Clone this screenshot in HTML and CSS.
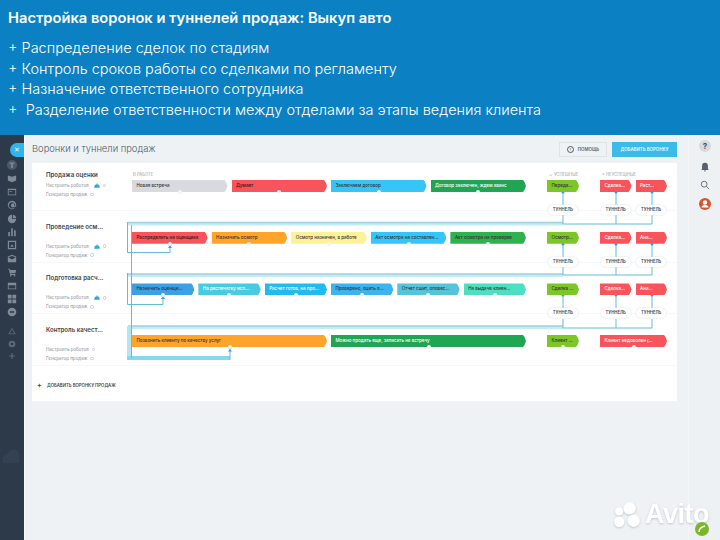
FILE: index.html
```html
<!DOCTYPE html>
<html lang="ru">
<head>
<meta charset="utf-8">
<title>Настройка воронок и туннелей продаж</title>
<link rel="stylesheet" href="styles.css">
</head>
<body>
<header class="hero">
  <h1 class="hero-title">Настройка воронок и туннелей продаж: Выкуп авто</h1>
  <ul class="hero-list">
    <li>+ Распределение сделок по стадиям</li>
    <li>+ Контроль сроков работы со сделками по регламенту</li>
    <li>+ Назначение ответственного сотрудника</li>
    <li>+&nbsp; Разделение ответственности между отделами за этапы ведения клиента</li>
  </ul>
</header>
<div class="app">
  <nav class="sidebar">
    <button class="toggle">✕</button>
    <svg class="nav-icon" viewBox="0 0 12 12"><circle cx="6" cy="6" r="6" fill="#4a5967"/><path d="M3 3h6v1.500H7v5H5v-5H3z"/></svg>
    <svg class="nav-icon" viewBox="0 0 12 12"><path d="M1 3l5 1.500L11 3v6L6 11 1 9z"/></svg>
    <svg class="nav-icon" viewBox="0 0 12 12"><path d="M1 2h10v8H1zM2 3.500v5.500h8V3.500zM3 5h3v1H3z" fill-rule="evenodd"/></svg>
    <svg class="nav-icon" viewBox="0 0 12 12"><path d="M6 1a5 5 0 1 0 3 9V8.800A3.800 3.800 0 1 1 9.800 6v1H8.500V4h-1v.500A2.200 2.200 0 1 0 8.500 8H11V6a5 5 0 0 0-5-5z"/></svg>
    <svg class="nav-icon" viewBox="0 0 12 12"><path d="M6 1a5 5 0 1 0 5 5H6z"/><path d="M7 0.800V5h4.200A5 5 0 0 0 7 .8z"/></svg>
    <svg class="nav-icon" viewBox="0 0 12 12"><path d="M1.500 6h2v5h-2zM5 1.500h2V11H5zM8.500 4h2v7h-2z"/></svg>
    <svg class="nav-icon" viewBox="0 0 12 12"><path d="M1 1h10v10H1zM2.500 2.500v7h7v-7zM4 8l2-3 2 3z" fill-rule="evenodd"/></svg>
    <svg class="nav-icon" viewBox="0 0 12 12"><path d="M1 3l5-2 5 2v7H1zM1.500 4L6 6.500 10.500 4 6 2.500z" fill-rule="evenodd"/></svg>
    <svg class="nav-icon" viewBox="0 0 12 12"><path d="M1 2h2l.5 1.500H11L10 7.500H4.300L4.600 8.500H10v1H3.800L2.300 3H1z"/><circle cx="4.500" cy="10.500" r="1"/><circle cx="9" cy="10.500" r="1"/></svg>
    <svg class="nav-icon" viewBox="0 0 12 12"><path d="M1 2h10v8H1zM2 5v4h8V5z" fill-rule="evenodd"/></svg>
    <svg class="nav-icon" viewBox="0 0 12 12"><path d="M1 1h4.500v4.500H1zM6.500 1H11v4.500H6.500zM1 6.500h4.500V11H1zM6.500 6.500H11V11H6.500z"/></svg>
    <svg class="nav-icon" viewBox="0 0 12 12"><path d="M6 .8a5.200 5.200 0 1 0 0 10.400A5.200 5.200 0 0 0 6 .8zM3.500 5h5v2h-5z" fill-rule="evenodd"/></svg>
    <svg class="nav-icon nav-gap" viewBox="0 0 12 12"><path d="M6 2l4.500 8h-9zM6 4L3.300 9h5.400z" fill-rule="evenodd"/></svg>
    <svg class="nav-icon nav-tight" viewBox="0 0 12 12"><path d="M6 2a4 4 0 1 0 0 8 4 4 0 0 0 0-8zm0 2.500a1.500 1.500 0 1 1 0 3 1.500 1.500 0 0 1 0-3z" fill-rule="evenodd"/></svg>
    <svg class="nav-icon nav-tight" viewBox="0 0 12 12"><path d="M5.300 2.500h1.400v2.800h2.800v1.400H6.700v2.800H5.300V6.700H2.500V5.300h2.800z"/></svg>
    <svg class="side-mark" viewBox="0 0 24 24"><path d="M3 20a6 6 0 0 1 4-10 7 7 0 0 1 13-1v11z"/></svg>
  </nav>
  <main class="main">
    <div class="page-head">
      <h2 class="page-title">Воронки и туннели продаж</h2>
      <div class="head-actions">
        <button class="btn btn-help"><span class="btn-mark">!</span>ПОМОЩЬ</button>
        <button class="btn btn-add">ДОБАВИТЬ ВОРОНКУ</button>
      </div>
    </div>
    <section class="panel">
      <svg class="links" viewBox="32 163 645 238" aria-hidden="true">
        <g class="band">
          <path d="M128 224H563"/>
          <path d="M128 275.500H563"/>
          <path d="M128 327.500H563"/>
        </g>
        <g class="band-edge">
          <path d="M128 222.500H563"/>
          <path d="M128 274H563"/>
          <path d="M128 326H563"/>
        </g>
        <g class="band-side">
          <path d="M129 326v32"/>
        </g>
        <g class="band-strong">
          <path d="M127 358H230"/>
        </g>
        <g class="thin">
          <path d="M127.500 222V252.500H170V246"/>
          <path d="M127.500 273V304.500H163V297"/>
          <path d="M131.500 225V358"/>
          <path d="M230 360V349"/>
          <path d="M563 215V224H652V215"/>
          <path d="M616 215V224"/>
          <path d="M563 267V275H652V267"/>
          <path d="M616 267V275"/>
          <path d="M563 319V328H652V319"/>
          <path d="M616 319V328"/>
        </g>
        <g class="feed">
          <path d="M563 192V205M616 192V205M652 192V205"/>
          <path d="M563 244V257M616 244V257M652 244V257"/>
          <path d="M563 295V309M616 295V309M652 295V309"/>
        </g>
        <g class="node">
          <circle cx="170" cy="244" r="2"/><circle cx="163" cy="295" r="2"/><circle cx="230" cy="347" r="2"/>
          <circle cx="563" cy="192" r="1.500"/><circle cx="616" cy="192" r="1.500"/><circle cx="652" cy="192" r="1.500"/>
          <circle cx="616" cy="244" r="1.500"/><circle cx="652" cy="244" r="1.500"/><circle cx="563" cy="244" r="1.500"/>
          <circle cx="563" cy="295" r="1.500"/><circle cx="616" cy="295" r="1.500"/><circle cx="652" cy="295" r="1.500"/>
          <path d="M170 245.500l-2 2.500h4zM163 296.500l-2 2.500h4zM230 349l-2 2.500h4z"/>
        </g>
      </svg>

      <article class="funnel">
        <div class="info">
          <h3 class="funnel-name">Продажа оценки</h3>
          <p class="info-line">Настроить роботов <svg class="bot" viewBox="0 0 8 7"><path d="M1 2.500h6l1 4H0zM2.500 1h3v1h-3z"/></svg><span class="q"></span></p>
          <p class="info-line">Генератор продаж <span class="q"></span></p>
        </div>
        <div class="col col-work">
          <div class="col-label">В РАБОТЕ</div>
          <div class="chips">
            <div class="stage"><span class="chip c-grey">Новая встреча</span></div>
            <div class="stage"><span class="chip c-red dark">Думает</span></div>
            <div class="stage"><span class="chip c-sky">Заключаем договор</span></div>
            <div class="stage"><span class="chip c-green light">Договор заключен, ждем аванс</span></div>
          </div>
        </div>
        <div class="col col-won">
          <div class="col-label">✓ УСПЕШНЫЕ</div>
          <div class="chips">
            <div class="stage t"><span class="chip c-lime">Переда...</span><span class="pill">ТУННЕЛЬ</span></div>
          </div>
        </div>
        <div class="col col-lost">
          <div class="col-label">× НЕУСПЕШНЫЕ</div>
          <div class="chips">
            <div class="stage t"><span class="chip c-red light">Сделка...</span><span class="pill">ТУННЕЛЬ</span></div>
            <div class="stage t"><span class="chip c-red light">Раст...</span><span class="pill">ТУННЕЛЬ</span></div>
          </div>
        </div>
      </article>

      <article class="funnel">
        <div class="info">
          <h3 class="funnel-name tall">Проведение осм...</h3>
          <p class="info-line">Настроить роботов <svg class="bot" viewBox="0 0 8 7"><path d="M1 2.500h6l1 4H0zM2.500 1h3v1h-3z"/></svg><span class="q"></span></p>
          <p class="info-line">Генератор продаж <span class="q"></span></p>
        </div>
        <div class="col col-work">
          <div class="col-label"></div>
          <div class="chips">
            <div class="stage"><span class="chip c-red dark">Распределить на оценщика</span></div>
            <div class="stage"><span class="chip c-orange">Назначить осмотр</span></div>
            <div class="stage"><span class="chip c-yellow">Осмотр назначен, в работе</span></div>
            <div class="stage"><span class="chip c-sky">Акт осмотра на составлен...</span></div>
            <div class="stage"><span class="chip c-green2">Акт осмотра на проверке</span></div>
          </div>
        </div>
        <div class="col col-won">
          <div class="col-label"></div>
          <div class="chips">
            <div class="stage t"><span class="chip c-lime">Осмотр...</span><span class="pill">ТУННЕЛЬ</span></div>
          </div>
        </div>
        <div class="col col-lost">
          <div class="col-label"></div>
          <div class="chips">
            <div class="stage t"><span class="chip c-red light">Сделка...</span><span class="pill">ТУННЕЛЬ</span></div>
            <div class="stage t"><span class="chip c-red light">Ана...</span><span class="pill">ТУННЕЛЬ</span></div>
          </div>
        </div>
      </article>

      <article class="funnel">
        <div class="info">
          <h3 class="funnel-name tall">Подготовка расч...</h3>
          <p class="info-line">Настроить роботов <svg class="bot" viewBox="0 0 8 7"><path d="M1 2.500h6l1 4H0zM2.500 1h3v1h-3z"/></svg><span class="q"></span></p>
          <p class="info-line">Генератор продаж <span class="q"></span></p>
        </div>
        <div class="col col-work">
          <div class="col-label"></div>
          <div class="chips">
            <div class="stage"><span class="chip c-blue">Назначить оценщи...</span></div>
            <div class="stage"><span class="chip c-cyan light">На респечатку исп...</span></div>
            <div class="stage"><span class="chip c-azure light">Расчет готов, на про...</span></div>
            <div class="stage"><span class="chip c-sky2">Проверено, оцить о...</span></div>
            <div class="stage"><span class="chip c-teal">Отчет сшит, оповес...</span></div>
            <div class="stage"><span class="chip c-aqua">На выдаче клиен...</span></div>
          </div>
        </div>
        <div class="col col-won">
          <div class="col-label"></div>
          <div class="chips">
            <div class="stage t"><span class="chip c-lime">Сделка ...</span><span class="pill">ТУННЕЛЬ</span></div>
          </div>
        </div>
        <div class="col col-lost">
          <div class="col-label"></div>
          <div class="chips">
            <div class="stage t"><span class="chip c-red light">Сделка...</span><span class="pill">ТУННЕЛЬ</span></div>
            <div class="stage t"><span class="chip c-red light">Ана...</span><span class="pill">ТУННЕЛЬ</span></div>
          </div>
        </div>
      </article>

      <article class="funnel">
        <div class="info">
          <h3 class="funnel-name tall">Контроль качест...</h3>
          <p class="info-line">Настроить роботов <span class="q"></span></p>
          <p class="info-line">Генератор продаж <span class="q"></span></p>
        </div>
        <div class="col col-work">
          <div class="col-label"></div>
          <div class="chips">
            <div class="stage"><span class="chip c-orange">Позвонить клиенту по качеству услуг</span></div>
            <div class="stage"><span class="chip c-green light">Можно продать еще, записать на встречу</span></div>
          </div>
        </div>
        <div class="col col-won">
          <div class="col-label"></div>
          <div class="chips">
            <div class="stage"><span class="chip c-lime">Клиент ...</span></div>
          </div>
        </div>
        <div class="col col-lost">
          <div class="col-label"></div>
          <div class="chips">
            <div class="stage"><span class="chip c-red light">Клиент недоволен (...</span></div>
          </div>
        </div>
      </article>

      <div class="add-funnel"><span class="add-plus">+</span>ДОБАВИТЬ ВОРОНКУ ПРОДАЖ</div>
    </section>
  </main>
  <aside class="rail">
    <span class="rail-help">?</span>
    <svg class="rail-icon" viewBox="0 0 12 12"><path d="M6 1a3.500 3.500 0 0 0-3.500 3.500V8L1.500 9.500h9L9.500 8V4.500A3.500 3.500 0 0 0 6 1zM4.800 10.200h2.400a1.200 1.200 0 0 1-2.400 0z"/></svg>
    <svg class="rail-icon" viewBox="0 0 12 12"><path class="lens" d="M5 1.500a3.500 3.500 0 1 0 0 7 3.500 3.500 0 0 0 0-7zM7.600 7.600L11 11"/></svg>
    <svg class="rail-avatar" viewBox="0 0 12 12"><circle cx="6" cy="6" r="6" fill="#d9512f"/><circle cx="6" cy="4.500" r="2.200" fill="#fff"/><path d="M2.500 9.500a3.500 2.500 0 0 1 7 0z" fill="#fff"/></svg>
  </aside>
</div>
<div class="avito">
  <svg class="avito-dots" viewBox="0 0 30 26"><circle cx="17" cy="7" r="6"/><circle cx="7" cy="10" r="4"/><circle cx="7" cy="20" r="5"/><circle cx="21" cy="19" r="6"/></svg>
  <span class="avito-word">Avito</span>
</div>
<svg class="ok-badge" viewBox="0 0 14 14"><circle cx="7" cy="7" r="7" fill="#7ab829"/><path d="M4 10c0-3 2-5 6-6" fill="none" stroke="#fff" stroke-width="1.500"/></svg>
</body>
</html>
```

FILE: styles.css
```css
* { box-sizing: border-box; }
html, body { margin: 0; padding: 0; }
body {
  position: relative;
  width: 720px;
  height: 540px;
  overflow: hidden;
  font-family: "Inter", "Noto Sans", sans-serif;
  background: #eef2f5;
  color: #333;
}
h1, h2, h3, p, ul { margin: 0; padding: 0; }

.hero {
  height: 135px;
  padding: 9px 8px 0;
  background: #0b81c4;
  color: #fff;
}
.hero-title {
  font-size: 14.7px;
  line-height: 19px;
  font-weight: 600;
  margin-bottom: 10px;
}
.hero-list {
  list-style: none;
  font-size: 14.5px;
  line-height: 20.7px;
  font-weight: 300;
}

.app { display: flex; height: 405px; }

.sidebar {
  position: relative;
  width: 25px;
  flex: none;
  display: flex;
  flex-direction: column;
  align-items: center;
  padding-top: 8px;
  background: #2c3a49;
  border-right: 1px solid #f7f9fa;
}
.toggle {
  align-self: flex-end;
  width: 14px;
  height: 14px;
  padding: 0;
  border: 0;
  border-radius: 7px 0 0 7px;
  background: #2fb5ee;
  color: #e8f7fd;
  font-size: 7px;
  line-height: 14px;
  margin-bottom: 3px;
}
.nav-icon { width: 10px; height: 10px; margin-bottom: 3.4px; fill: #7f8b97; flex: none; }
.nav-gap { margin-top: 5px; fill: #5d6b78; }
.nav-tight { margin-bottom: 2px; fill: #5d6b78; }
.side-mark { margin-top: 82px; width: 22px; height: 22px; fill: #334252; }

.main { flex: 1; padding-left: 7px; padding-right: 11px; min-width: 0; }
.page-head {
  height: 28px;
  padding-top: 7px;
  display: flex;
  justify-content: space-between;
  align-items: flex-start;
}
.page-title {
  font-size: 9.4px;
  line-height: 14px;
  font-weight: 300;
  color: #4d5a66;
}
.head-actions { display: flex; gap: 5px; }
.btn {
  height: 15px;
  padding: 0;
  border: 0;
  font-family: inherit;
  font-size: 4.4px;
  font-weight: 600;
}
.btn-help {
  width: 48px;
  border: 1px solid #dfe3e6;
  background: #eff2f4;
  color: #59646e;
  display: flex;
  align-items: center;
  justify-content: center;
  gap: 4px;
}
.btn-mark {
  width: 7px;
  height: 7px;
  border: 1px solid #555;
  border-radius: 50%;
  font-size: 4px;
  line-height: 5px;
  text-align: center;
}
.btn-add { width: 65px; background: #3dbbe8; color: #eaf8fd; }

.panel {
  position: relative;
  height: 238px;
  background: #fff;
}
.links {
  position: absolute;
  left: 0;
  top: 0;
  width: 645px;
  height: 238px;
  fill: none;
  pointer-events: none;
}
.band { stroke: #c3ecf4; stroke-width: 3; }
.band-edge { stroke: #9fd0de; stroke-width: 1.500; }
.band-side { stroke: #b4e6f2; stroke-width: 4; }
.band-strong { stroke: #84d9ee; stroke-width: 4; }
.thin { stroke: #63bdd6; stroke-width: 1; }
.feed { stroke: #59bfe0; stroke-width: 1; }
.node { fill: #2f9fd6; }

.funnel {
  display: flex;
  height: 48px;
  margin-bottom: 3.7px;
  border-bottom: 1px solid #f5f7f8;
}
.info { width: 100px; flex: none; padding: 7px 0 0 14px; }
.funnel-name {
  font-size: 6.1px;
  line-height: 10px;
  font-weight: 600;
  color: #3c444c;
  margin-bottom: 1px;
  white-space: nowrap;
}
.funnel-name.tall { margin-bottom: 10px; }
.info-line {
  display: flex;
  align-items: center;
  font-size: 4.5px;
  line-height: 9px;
  color: #87919a;
  white-space: nowrap;
}
.bot { width: 6px; height: 5px; margin-left: 5px; fill: #35a9d6; }
.q {
  width: 3.500px;
  height: 3.500px;
  margin-left: 3px;
  border: 1px solid #c6cdd2;
  border-radius: 50%;
}

.col { flex: none; position: relative; }
.col-work { width: 394px; }
.col-won { margin-left: 21px; width: 32px; }
.col-lost { margin-left: 21px; width: 67px; }
.col-label {
  height: 17px;
  padding-top: 9px;
  font-size: 4.2px;
  line-height: 5px;
  color: #98a1a8;
  white-space: nowrap;
}
.col-work .col-label { padding-left: 1px; }
.col-won .col-label, .col-lost .col-label { padding-left: 2px; }

.chips { display: flex; gap: 4px; }
.stage {
  position: relative;
  flex: 1 1 0;
  min-width: 0;
  display: flex;
  flex-direction: column;
  align-items: center;
}
.stage:not(.t)::after {
  content: "";
  position: absolute;
  left: 50%;
  top: 10px;
  width: 4px;
  height: 4px;
  margin-left: -2px;
  border-radius: 50%;
  background: #f2f5f6;
}
.chip {
  display: block;
  width: 100%;
  height: 12px;
  padding: 0 6px 0 4.500px;
  font-size: 4.5px;
  line-height: 12px;
  font-weight: 500;
  color: #333;
  white-space: nowrap;
  overflow: hidden;
  clip-path: polygon(0 0, calc(100% - 3px) 0, calc(100% - 1.500px) 2px, 100% 50%, calc(100% - 1.500px) calc(100% - 2px), calc(100% - 3px) 100%, 0 100%);
}
.pill {
  position: relative;
  z-index: 1;
  margin-top: 13px;
  width: 30px;
  height: 10px;
  border-radius: 5px;
  background: #fff;
  box-shadow: 0 0 2px #cfd8dc;
  font-size: 4.2px;
  line-height: 10px;
  font-weight: 600;
  text-align: center;
  color: #3e474f;
}
.light { color: #fff; }
.dark { color: #2b1a1a; }
.c-grey { background: #d8dadf; }
.c-red { background: #f9535b; }
.c-sky { background: #36c5f8; }
.c-green { background: #1fa655; }
.c-green2 { background: #2fb14e; }
.c-lime { background: #7cc628; }
.c-orange { background: #ffa42a; }
.c-yellow { background: #fdf19a; }
.c-blue { background: #3aa0e8; }
.c-cyan { background: #45cce0; }
.c-azure { background: #1fbbf3; }
.c-sky2 { background: #3bb4ef; }
.c-teal { background: #55c4da; }
.c-aqua { background: #4de0c0; }

.add-funnel {
  display: flex;
  align-items: center;
  padding: 13px 0 0 5px;
  font-size: 4.3px;
  line-height: 6px;
  font-weight: 600;
  color: #3f474e;
}
.add-plus { width: 10px; font-size: 7px; font-weight: 700; }

.rail {
  width: 32px;
  flex: none;
  display: flex;
  flex-direction: column;
  align-items: center;
  padding: 5px 0 0 1px;
  background: #edf1f4;
  border-left: 1px solid #f4f6f8;
}
.rail-help {
  width: 12px;
  height: 12px;
  border-radius: 50%;
  background: #d6dade;
  color: #444e57;
  font-size: 8px;
  line-height: 12px;
  font-weight: 700;
  text-align: center;
  margin-bottom: 10px;
}
.rail-icon { width: 10px; height: 10px; fill: #56616b; margin-bottom: 8px; flex: none; }
.lens { fill: none; stroke: #6c7680; stroke-width: 1.200; }
.rail-avatar { width: 12px; height: 12px; }

.avito {
  position: absolute;
  left: 612px;
  top: 498px;
  display: flex;
  align-items: center;
  gap: 2px;
  filter: drop-shadow(0 1px 1px rgba(90, 100, 110, .3));
}
.avito-dots { width: 31px; height: 27px; fill: #fff; }
.avito-word {
  font-family: "Liberation Sans", sans-serif;
  font-size: 27px;
  line-height: 32px;
  font-weight: 700;
  color: #fff;
  letter-spacing: -.5px;
}
.ok-badge { position: absolute; left: 695px; top: 522px; width: 14px; height: 14px; }
```
